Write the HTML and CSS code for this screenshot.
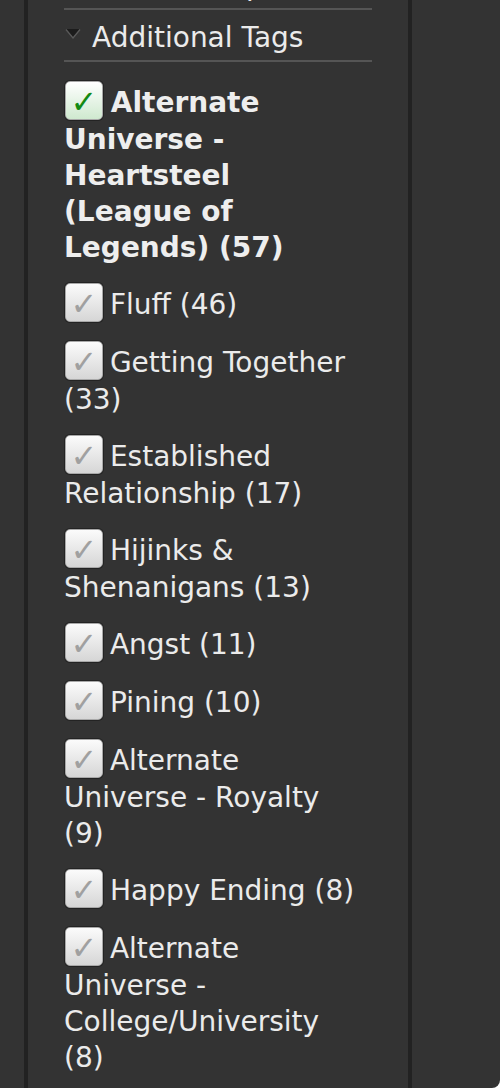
FILE: index.html
```html
<!DOCTYPE html>
<html lang="en">
<head>
<meta charset="utf-8">
<title>Additional Tags</title>
<link rel="stylesheet" href="styles.css">
</head>
<body>
<div class="page">
  <div class="panel">
    <div class="section section-prev">
      <h3 class="heading"><span class="toggle"><svg width="16" height="11" viewBox="0 0 16 11"><polygon points="1,1 15,1 8,10" fill="#1c1c1c"/><polyline points="1,1.5 8,10 15,1.5" fill="none" stroke="#5a5a5a" stroke-width="1.3"/></svg></span>Relationships</h3>
    </div>
    <div class="section">
      <h3 class="heading"><span class="toggle"><svg width="16" height="11" viewBox="0 0 16 11"><polygon points="1,1 15,1 8,10" fill="#1c1c1c"/><polyline points="1,1.5 8,10 15,1.5" fill="none" stroke="#5a5a5a" stroke-width="1.3"/></svg></span>Additional Tags</h3>
      <ul class="tags">
        <li class="tag tag-on"><label><span class="box">✓</span> Alternate Universe - Heartsteel (League of Legends) (57)</label></li>
        <li class="tag"><label><span class="box">✓</span> Fluff (46)</label></li>
        <li class="tag"><label><span class="box">✓</span> Getting Together (33)</label></li>
        <li class="tag"><label><span class="box">✓</span> Established Relationship (17)</label></li>
        <li class="tag"><label><span class="box">✓</span> Hijinks &amp; Shenanigans (13)</label></li>
        <li class="tag"><label><span class="box">✓</span> Angst (11)</label></li>
        <li class="tag"><label><span class="box">✓</span> Pining (10)</label></li>
        <li class="tag"><label><span class="box">✓</span> Alternate Universe - Royalty (9)</label></li>
        <li class="tag"><label><span class="box">✓</span> Happy Ending (8)</label></li>
        <li class="tag"><label><span class="box">✓</span> Alternate Universe - College/University (8)</label></li>
        <li class="tag"><label><span class="box">✓</span> Alternate Universe - Modern Setting (7)</label></li>
      </ul>
    </div>
  </div>
</div>
</body>
</html>
```

FILE: styles.css
```css
html, body {
  margin: 0;
  padding: 0;
  background: #ffffff;
}

.page {
  width: 500px;
  height: 1088px;
  overflow: hidden;
  background: #333333;
  border-bottom-right-radius: 8px;
  font-family: "DejaVu Sans", Verdana, sans-serif;
  color: #ebebeb;
}

.panel {
  margin-left: 24px;
  width: 308px;
  min-height: 1200px;
  padding: 0 36px;
  border-left: 4px solid #222222;
  border-right: 4px solid #222222;
}

.section-prev {
  margin-top: -42px;
}

.heading {
  margin: 0;
  padding: 9px 0 4px;
  font-size: 28px;
  font-weight: normal;
  line-height: 37px;
  border-bottom: 2px solid #555555;
  white-space: nowrap;
}

.toggle {
  display: inline-block;
  width: 28px;
  vertical-align: 8px;
}

.toggle svg {
  display: block;
  margin-left: 1px;
}

.tags {
  list-style: none;
  margin: 0 10px 0 0;
  padding: 19px 0 0;
}

.tag {
  margin: 0 0 17px;
  font-size: 28px;
  line-height: 36px;
}

.tag-on {
  font-weight: bold;
  color: #eeeeee;
}

.box {
  display: inline-block;
  overflow: hidden;
  box-sizing: border-box;
  width: 38px;
  height: 39px;
  margin: 0 -2px 2px 1px;
  vertical-align: -10px;
  border: 1px solid #a8a8a8;
  border-radius: 5px;
  box-shadow: 0 0 0 1px #232323;
  background: linear-gradient(#fbfbfb, #d6d6d6);
  color: #a0a0a0;
  font-weight: normal;
  font-size: 32px;
  line-height: 40px;
  text-align: center;
}

.tag-on .box {
  background: linear-gradient(#ffffff, #cfe9cf);
  color: #138a13;
  font-weight: bold;
}
```
